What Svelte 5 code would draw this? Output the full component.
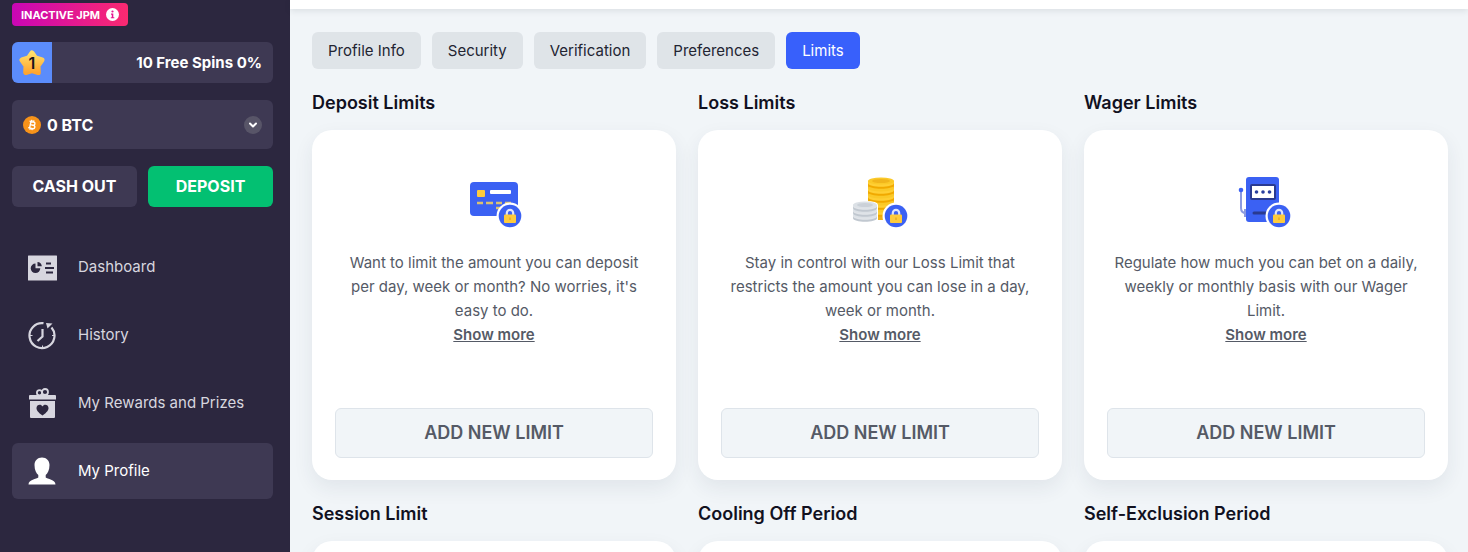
<script lang="ts">
	const navItems = [
		{ id: 'dashboard', label: 'Dashboard' },
		{ id: 'history', label: 'History' },
		{ id: 'rewards', label: 'My Rewards and Prizes' },
		{ id: 'profile', label: 'My Profile' }
	];

	const tabs = ['Profile Info', 'Security', 'Verification', 'Preferences', 'Limits'];

	const limits = [
		{
			title: 'Deposit Limits',
			icon: 'card',
			text: "Want to limit the amount you can deposit per day, week or month? No worries, it's easy to do."
		},
		{
			title: 'Loss Limits',
			icon: 'coins',
			text: 'Stay in control with our Loss Limit that restricts the amount you can lose in a day, week or month.'
		},
		{
			title: 'Wager Limits',
			icon: 'slot',
			text: 'Regulate how much you can bet on a daily, weekly or monthly basis with our Wager Limit.'
		},
		{ title: 'Session Limit' },
		{ title: 'Cooling Off Period' },
		{ title: 'Self-Exclusion Period' }
	];

	let activeNav = $state('profile');
	let activeTab = $state('Limits');
	let currency = $state('btc');
</script>

<div class="layout">
	<aside class="sidebar">
		<button class="badge">
			INACTIVE JPM
			<svg width="13" height="13" viewBox="0 0 13 13" aria-hidden="true">
				<circle cx="6.5" cy="6.5" r="6.5" fill="#fff" />
				<circle cx="6.5" cy="3.5" r="1.1" fill="#e5148f" />
				<path d="M5 5.6h2.3v3.6h1v1.1H4.8V9.2h1V6.7H5z" fill="#e5148f" />
			</svg>
		</button>

		<div class="level">
			<div class="levelStar">
				<svg width="28" height="28" viewBox="0 0 28 28" aria-hidden="true">
					<defs>
						<linearGradient id="star" x1="0" y1="0" x2="0" y2="1">
							<stop offset="0" stop-color="#ffdf6b" />
							<stop offset="1" stop-color="#ffa52e" />
						</linearGradient>
					</defs>
					<path
						d="M14 4l3.500 5 6.500 2-4 5.800.3 6.700L14 21.500l-6.300 2 .3-6.700L4 11l6.500-2z"
						fill="url(#star)"
						stroke="url(#star)"
						stroke-width="5"
						stroke-linejoin="round"
					/>
				</svg>
				<span class="levelNumber">1</span>
			</div>
			<span class="levelText">10 Free Spins 0%</span>
		</div>

		<label class="balance">
			<svg width="18" height="18" viewBox="0 0 18 18" aria-hidden="true">
				<circle cx="9" cy="9" r="9" fill="#f7931a" />
				<g transform="rotate(12 9 9)" fill="none" stroke="#fff" stroke-width="1.4">
					<path d="M5.8 5.7h4.2a1.6 1.6 0 0 1 0 3.3H7.2M10 9h.5a1.7 1.7 0 0 1 0 3.4H5.8M7.3 5.7v6.7M7.9 4v1.7M9.9 4v1.7M7.9 12.4v1.7M9.9 12.4v1.7" />
				</g>
			</svg>
			<select bind:value={currency} aria-label="Balance">
				<option value="btc">0 BTC</option>
			</select>
			<svg width="18" height="18" viewBox="0 0 18 18" aria-hidden="true">
				<circle cx="9" cy="9" r="9" fill="#585568" />
				<path d="M6 7.5l3 3 3-3" fill="none" stroke="#fff" stroke-width="2" stroke-linecap="round" stroke-linejoin="round" />
			</svg>
		</label>

		<div class="actions">
			<button class="action">CASH OUT</button>
			<button class="action deposit">DEPOSIT</button>
		</div>

		<nav>
			{#each navItems as item}
				<a
					href="#{item.id}"
					class="navItem"
					class:active={activeNav === item.id}
					onclick={() => (activeNav = item.id)}
				>
					<svg width="30" height="30" viewBox="0 0 30 30" fill="currentColor" aria-hidden="true">
						{#if item.id === 'dashboard'}
							<path
								fill-rule="evenodd"
								d="M1.500 3.500h28a.5.5 0 0 1 .5.5v24a.5.5 0 0 1-.5.5h-28a.5.5 0 0 1-.5-.5V4a.5.5 0 0 1 .5-.5zM8.500 11.500a4.800 4.800 0 1 0 4.800 4.800H8.500zM10.500 10v4.300h4.300a4.300 4.300 0 0 0-4.300-4.300zM19 10.500v2h5v-2zM18 15v2h9v-2zM19 19.500v2h7v-2z"
							/>
						{:else if item.id === 'history'}
							<g fill="none" stroke="currentColor" stroke-width="2.2">
								<path d="M16.500 3.200A12.500 12.500 0 1 0 24.500 7.500" />
								<path d="M15.500 9v7.500l-5 4.500" />
								<path d="M3 15.500h2.500M25 15.500h2.500M15.500 25.500v2.500" stroke-width="1" />
							</g>
							<path d="M19 3l6.500.5-5 5z" />
						{:else if item.id === 'rewards'}
							<g fill="none" stroke="currentColor" stroke-width="1.800">
								<circle cx="12.500" cy="4.800" r="2.600" />
								<circle cx="18" cy="4" r="3" />
							</g>
							<path d="M3 7h25a1 1 0 0 1 1 1v3.500H2V8a1 1 0 0 1 1-1z" />
							<path
								fill-rule="evenodd"
								d="M3 13h25v16a1 1 0 0 1-1 1H4a1 1 0 0 1-1-1zM15.500 27.500c5-3.500 6-5.500 6-7.500 0-3.500-4.500-4.500-6-1.500-1.500-3-6-2-6 1.500 0 2 1 4 6 7.500z"
							/>
						{:else}
							<path
								d="M15 1.500c4.500 0 7.500 3.200 7.500 7.500 0 5-1.800 8.500-3.800 10v2.500c1.500 1.500 9.800 2 9.800 7H1.500c0-5 8.300-5.500 9.800-7V19c-2-1.500-3.800-5-3.800-10 0-4.300 3-7.500 7.500-7.500z"
							/>
						{/if}
					</svg>
					{item.label}
				</a>
			{/each}
		</nav>
	</aside>

	<div class="page">
		<header class="topbar"></header>

		<main>
			<div class="tabs">
				{#each tabs as tab}
					<button class="tab" class:active={activeTab === tab} onclick={() => (activeTab = tab)}>
						{tab}
					</button>
				{/each}
			</div>

			<div class="grid">
				{#each limits as limit}
					<section>
						<h2>{limit.title}</h2>
						<div class="card">
							{#if limit.text}
								<svg width="60" height="54" viewBox="0 0 60 54" aria-hidden="true">
									{#if limit.icon === 'card'}
										<rect x="6" y="7" width="48" height="34" rx="4" fill="#3b61f3" />
										<rect x="13" y="15" width="8" height="7" rx="1" fill="#fecb3c" />
										<rect x="26" y="15" width="21" height="4" rx="1" fill="#fff" />
										<path
											d="M13 28h6M22 28h7M32 28h6M41 28h6M32 33h6"
											stroke="#d9c173"
											stroke-width="2.5"
										/>
									{:else if limit.icon === 'coins'}
										<g transform="translate(1 0)">
											<path d="M17 7v34c0 2 6 4 13 4s13-2 13-4V7z" fill="#f1b017" />
											{#each [34, 27, 20, 13, 6] as y}
												<path d="M17 {y}v4c0 5 26 5 26 0v-4z" fill="#f1a900" />
												<path d="M17 {y}v2c0 5 26 5 26 0v-2z" fill="#ffcf35" />
												<ellipse cx="30" cy={y} rx="13" ry="3.5" fill="#fbc928" />
											{/each}
											<ellipse cx="30" cy="6" rx="9" ry="2" fill="#f1b51c" />
										</g>
										<g transform="translate(2 0)">
											<path d="M0 30q0-4 13-4t13 4v15H0z" fill="#fff" />
											{#each [40, 35, 30] as y}
												<path d="M1 {y}v3c0 5 24 5 24 0v-3z" fill="#c1c8d0" />
												<path d="M1 {y}v1c0 5 24 5 24 0v-1z" fill="#e1e5e9" />
												<ellipse cx="13" cy={y} rx="12" ry="3.5" fill="#dce1e6" />
											{/each}
											<ellipse cx="13" cy="30" rx="8" ry="2" fill="#cbd1d8" />
										</g>
									{:else}
										<g transform="translate(-3 0)">
											<rect x="13" y="2" width="33" height="45" rx="3" fill="#3b61f3" />
											<rect x="18" y="10" width="24" height="14" rx="1" fill="#fff" stroke="#293a91" stroke-width="2" />
											<g fill="#293f9f">
												<circle cx="23.500" cy="17" r="1.800" />
												<circle cx="30" cy="17" r="1.800" />
												<circle cx="36.500" cy="17" r="1.800" />
											</g>
											<path d="M21 38h17" stroke="#293a91" stroke-width="3" stroke-linecap="round" />
											<path d="M8 15v18q0 5 5 5" fill="none" stroke="#8c9be0" stroke-width="2" />
											<path d="M11 34h2v8h-2z" fill="#8c9be0" />
											<circle cx="8" cy="15" r="2.300" fill="#3b61f3" />
										</g>
									{/if}
									<g transform="translate({limit.icon === 'slot' ? 43 : 46} 41)">
										<circle r="13.500" fill="#fff" />
										<circle r="11.300" fill="#3b61f3" />
										<path d="M-3.200 0v-3a3.200 3.200 0 0 1 6.400 0v3" fill="none" stroke="#dfe5fa" stroke-width="2.200" />
										<rect x="-6" y="-1.500" width="12" height="8.500" rx="1" fill="#fecb3c" />
										<path d="M0 1.500v2.500" stroke="#e7ad23" stroke-width="1.500" />
									</g>
								</svg>
								<p>{limit.text}</p>
								<a class="more" href="#more">Show more</a>
								<button class="add">ADD NEW LIMIT</button>
							{/if}
						</div>
					</section>
				{/each}
			</div>
		</main>
	</div>
</div>

<style>
	:global(body) {
		margin: 0;
		background: #f1f5f8;
	}

	.layout {
		display: flex;
		height: 100vh;
		overflow: hidden;
		font-family: Inter, 'Liberation Sans', sans-serif;
		font-size: 15px;
		line-height: 24px;
		color: #11111f;
	}

	button,
	select {
		font: inherit;
		border: none;
		cursor: pointer;
	}

	.sidebar {
		box-sizing: border-box;
		flex: 0 0 290px;
		display: flex;
		flex-direction: column;
		padding: 3px 17px 0 12px;
		background: #2c273f;
		color: #fff;
	}

	.badge {
		display: flex;
		align-items: center;
		align-self: flex-start;
		gap: 6px;
		height: 23px;
		padding: 0 9px;
		border-radius: 4px;
		background: linear-gradient(90deg, #c906b5, #fa2a70);
		color: #fff;
		font-size: 11px;
		font-weight: 700;
	}

	.level {
		display: flex;
		align-items: center;
		justify-content: space-between;
		height: 41px;
		margin-top: 16px;
		padding-right: 11px;
		border-radius: 6px;
		background: #3e3953;
		overflow: hidden;
		font-weight: 700;
	}

	.levelStar {
		display: grid;
		place-items: center;
		width: 40px;
		height: 41px;
		background: #5b8cfb;
	}

	.levelStar > * {
		grid-area: 1 / 1;
	}

	.levelNumber {
		color: #16131c;
		font-size: 16px;
		font-weight: 600;
	}

	.balance {
		display: flex;
		align-items: center;
		gap: 6px;
		height: 49px;
		margin-top: 17px;
		padding: 0 11px;
		border-radius: 6px;
		background: #3e3953;
	}

	.balance select {
		flex: 1;
		appearance: none;
		padding: 0;
		background: transparent;
		color: #fff;
		font-size: 16px;
		font-weight: 700;
	}

	.actions {
		display: grid;
		grid-template-columns: 1fr 1fr;
		gap: 11px;
		margin-top: 17px;
	}

	.action {
		height: 41px;
		padding: 0 0 2px;
		border-radius: 6px;
		background: #3e3953;
		color: #fff;
		font-size: 16px;
		font-weight: 700;
	}

	.deposit {
		background: #03c072;
	}

	nav {
		display: flex;
		flex-direction: column;
		gap: 12px;
		margin-top: 32px;
	}

	.navItem {
		display: flex;
		align-items: center;
		gap: 21px;
		height: 56px;
		padding-left: 15px;
		border-radius: 6px;
		color: #d7d6df;
		text-decoration: none;
	}

	.navItem.active {
		background: #3e3953;
		color: #fff;
	}

	.page {
		flex: 1;
		min-width: 0;
	}

	.topbar {
		height: 9px;
		background: #fff;
		box-shadow: 0 2px 6px rgba(30, 40, 50, 0.1);
	}

	main {
		padding: 23px 20px 0 22px;
	}

	.tabs {
		display: flex;
		gap: 11px;
	}

	.tab {
		height: 37px;
		padding: 0 16px;
		border-radius: 6px;
		background: #dfe4e8;
		color: #232432;
	}

	.tab.active {
		background: #3860fb;
		color: #fff;
	}

	.grid {
		display: grid;
		grid-template-columns: repeat(3, 1fr);
		gap: 22px;
		margin-top: 22px;
	}

	h2 {
		margin: 0 0 15px;
		font-size: 18px;
		line-height: 24px;
		font-weight: 600;
	}

	.card {
		box-sizing: border-box;
		display: flex;
		flex-direction: column;
		align-items: center;
		min-height: 350px;
		padding: 45px 23px 22px;
		border-radius: 20px;
		background: #fff;
		box-shadow: 0 8px 20px rgba(40, 50, 80, 0.08);
		color: #555a66;
		text-align: center;
	}

	p {
		max-width: 310px;
		margin: 22px 0 0;
	}

	.more {
		color: inherit;
		font-weight: 600;
	}

	.add {
		width: 100%;
		height: 50px;
		margin-top: auto;
		border: 1px solid #dee4ea;
		border-radius: 6px;
		background: #f1f5f8;
		color: #555a66;
		font-size: 18px;
		font-weight: 600;
	}
</style>
